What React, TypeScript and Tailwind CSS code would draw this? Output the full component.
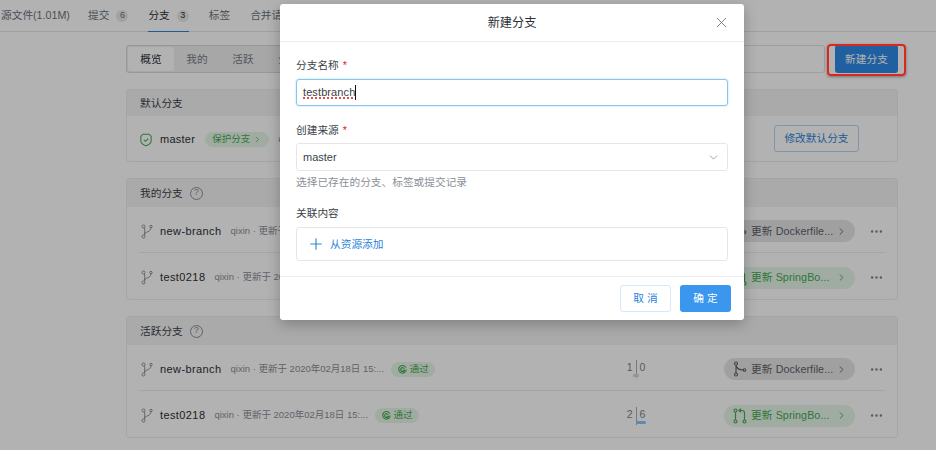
import { ChevronDown, ChevronRight, Ellipsis, Plus, X } from "lucide-react";

type Branch = {
  name: string;
  ahead: number;
  behind: number;
  behindBar: string;
  mergeTitle: string;
  green: boolean;
};

const branches: Branch[] = [
  { name: "new-branch", ahead: 1, behind: 0, behindBar: "w-0", mergeTitle: "更新 Dockerfile...", green: false },
  { name: "test0218", ahead: 2, behind: 6, behindBar: "w-[10px]", mergeTitle: "更新 SpringBo...", green: true },
];

function BranchIcon() {
  return (
    <svg viewBox="0 0 12 15" className="ml-[2px] h-[15px] w-[12px] shrink-0 text-[#8a8f98]" fill="none" stroke="currentColor" strokeWidth="1">
      <circle cx="2.500" cy="2.500" r="1.500" />
      <circle cx="2.500" cy="12.500" r="1.500" />
      <circle cx="10" cy="2.500" r="1.200" />
      <path d="M3.500 4c.3 2 .3 4 0 7M10 3.700c0 2.800-2.500 3.800-4.500 4.600-1 .4-1.700 1-2 1.700" />
    </svg>
  );
}

function MergedIcon() {
  return (
    <svg viewBox="0 0 14 16" className="h-[16px] w-[14px] shrink-0" fill="none" stroke="currentColor" strokeWidth="1.100">
      <circle cx="3" cy="2.500" r="1.500" />
      <circle cx="3" cy="13.500" r="1.500" />
      <circle cx="11.500" cy="9" r="1.300" />
      <path d="M3 4v8M3 4.500c.8 3 3.500 4.500 7.200 4.500" />
    </svg>
  );
}

function PullIcon() {
  return (
    <svg viewBox="0 0 14 16" className="h-[16px] w-[14px] shrink-0" fill="none" stroke="currentColor" strokeWidth="1.200">
      <circle cx="2.500" cy="2.500" r="1.500" />
      <circle cx="2.500" cy="13.500" r="1.500" />
      <circle cx="11.500" cy="13.500" r="1.500" />
      <path d="M2.500 4v8M11.500 12V5c0-1.500-1-2.500-2.500-2.500H6.500M8 .8 6 2.500 8 4.200" />
    </svg>
  );
}

function ShieldIcon() {
  return (
    <svg viewBox="0 0 14 16" className="h-[14px] w-[12px] shrink-0 text-[#45a853]" fill="none" stroke="currentColor" strokeWidth="1.200">
      <path d="M3.500 1.200h7L13 3.500v5.500c0 2.500-2.800 4.800-6 5.800-3.200-1-6-3.300-6-5.800V3.500z" />
      <path d="m4.500 7.800 1.900 1.800 3.200-3.200" />
    </svg>
  );
}

function PassBadge() {
  return (
    <span className="flex h-[15px] w-[44px] shrink-0 items-center justify-center gap-[3px] rounded-full bg-[#e6f7e8] text-[9.500px] text-[#45a853]">
      <svg viewBox="0 0 12 12" className="h-[9px] w-[9px]" fill="none" stroke="currentColor" strokeWidth="1.500">
        <path d="M10.500 3.500A5 5 0 1 0 11 6M8.500 5A2.600 2.600 0 1 0 8.600 7H6" />
      </svg>
      通过
    </span>
  );
}

function BranchRow({ branch, last }: { branch: Branch; last: boolean }) {
  return (
    <div className={`flex h-[46px] items-center pt-[3px] ${last ? "" : "border-b border-[#ececec]"}`}>
      <div className="flex min-w-0 flex-1 items-center">
        <BranchIcon />
        <span className="ml-[7px] text-[11px] tracking-[0.4px] text-[#2b2f36]">{branch.name}</span>
        <span className="ml-[9px] whitespace-nowrap text-[9.500px] text-[#8a8f98]">qixin · 更新于 2020年02月18日 15:...</span>
        <span className="ml-[7px]">
          <PassBadge />
        </span>
      </div>
      <div className="relative mr-[76px] flex h-[18px] w-[24px] items-start justify-center gap-[3px] text-[10.500px] leading-[14px] text-[#7d838c]">
        <span>{branch.ahead}</span>
        <span className="h-[18px] w-px bg-[#a8aeb8]" />
        <span>{branch.behind}</span>
        <span className={`absolute top-[14px] left-[12px] h-[3px] rounded-r-sm bg-[#8cc4f7] ${branch.behindBar}`} />
        {branch.behind === 0 && <span className="absolute top-[14px] left-[9px] h-[3px] w-[6px] bg-[#cfd8e2]" />}
      </div>
      <div
        className={`flex h-[22px] w-[131px] shrink-0 items-center rounded-full pr-[8px] pl-[9px] text-[10.700px] tracking-[0.1px] ${
          branch.green ? "bg-[#e6f7e8] text-[#45a853]" : "bg-[#e6e6e6] text-[#5b616b]"
        }`}
      >
        {branch.green ? <PullIcon /> : <MergedIcon />}
        <span className="ml-[4px] flex-1 whitespace-nowrap">{branch.mergeTitle}</span>
        <ChevronRight size={11} />
      </div>
      <Ellipsis size={15} className="mr-[1px] ml-[14px] text-[#7d838c]" />
    </div>
  );
}

function BranchSection({ title }: { title: string }) {
  return (
    <section className="mt-[16px] rounded-[3px] border border-[#ececec]">
      <div className="flex h-[28px] items-center gap-[7px] bg-[#f4f4f4] px-[13px] text-[10.700px] text-[#3a3f47]">
        {title}
        <span className="flex h-[13px] w-[13px] items-center justify-center rounded-full border border-[#8a8f98] text-[9px] text-[#8a8f98]">?</span>
      </div>
      <div className="px-[12px]">
        {branches.map((b, i) => (
          <BranchRow key={b.name} branch={b} last={i === branches.length - 1} />
        ))}
      </div>
    </section>
  );
}

function Tab({ label, count, active }: { label: string; count?: number; active?: boolean }) {
  return (
    <div className={`flex h-[32px] items-center gap-[7px] border-b-[1px] ${active ? "border-[#2a83dc] text-[#2b2f36]" : "border-transparent text-[#6b7280]"}`}>
      {label}
      {count !== undefined && (
        <span className="flex h-[12px] min-w-[12px] items-center justify-center rounded-full bg-[#e8e8e8] text-[9px]">{count}</span>
      )}
    </div>
  );
}

export default function App() {
  return (
    <div className="relative h-[450px] w-[936px] overflow-hidden bg-white font-['Liberation_Sans','Noto_Sans_CJK_SC',sans-serif]">
      {/* page behind the dialog */}
      <div className="flex h-[32px] gap-[20px] border-b border-[#e4e4e4] pl-px text-[10.700px]">
        <div className="w-[67px] whitespace-nowrap">
          <Tab label="源文件(1.01M)" />
        </div>
        <Tab label="提交" count={6} />
        <Tab label="分支" count={3} active />
        <Tab label="标签" />
        <Tab label="合并请求" />
      </div>

      <main className="ml-[126px] w-[772px] pt-[13px]">
        <div className="flex h-[28px] justify-between">
          <div className="flex rounded-[3px] border border-[#d8d8d8] bg-[#efefef] p-px text-[10.700px] text-[#777c85]">
            <span className="flex w-[46px] items-center justify-center rounded-[2px] bg-white text-[#2b2f36]">概览</span>
            <span className="flex w-[46px] items-center justify-center">我的</span>
            <span className="flex w-[46px] items-center justify-center">活跃</span>
            <span className="flex w-[46px] items-center justify-center">全部</span>
          </div>
          <div className="ml-[16px] flex-1 rounded-[3px] border border-[#e2e2e2]" />
          <button className="ml-[10px] h-[28px] w-[63px] rounded-[3px] bg-[#2f8ae6] text-[10.700px] text-white">新建分支</button>
        </div>

        <section className="mt-[16px] rounded-[3px] border border-[#ececec]">
          <div className="flex h-[26px] items-center bg-[#f4f4f4] px-[13px] text-[10.700px] text-[#3a3f47]">默认分支</div>
          <div className="flex h-[45px] items-center px-[13px]">
            <div className="flex items-center pt-[2px]">
              <ShieldIcon />
              <span className="ml-[8px] text-[11px] tracking-[0.25px] text-[#2b2f36]">master</span>
              <span className="ml-[10px] flex h-[15px] items-center gap-[3px] rounded-full bg-[#e6f7e8] px-[7px] text-[9.500px] text-[#45a853]">
                保护分支 <ChevronRight size={9} />
              </span>
              <span className="ml-[9px] whitespace-nowrap text-[9.500px] text-[#8a8f98]">qixin</span>
            </div>
            <button className="mr-[25px] ml-auto h-[27px] w-[85px] rounded-[3px] border border-[#b5d6f7] text-[10.700px] text-[#2a83dc]">修改默认分支</button>
          </div>
        </section>

        <BranchSection title="我的分支" />
        <BranchSection title="活跃分支" />
      </main>

      {/* dim layer */}
      <div className="absolute inset-0 bg-black/30" />

      {/* annotation around the new branch button */}
      <div className="absolute top-[44px] left-[827px] h-[32px] w-[79px] rounded-[4px] border-[2px] border-[#d9281e] shadow-[0_1px_3px_rgba(0,0,0,0.35)]" />

      {/* dialog */}
      <div className="absolute top-[4px] left-[280px] flex h-[316px] w-[464px] flex-col rounded-[3px] bg-white shadow-[0_4px_14px_rgba(0,0,0,0.25)]">
        <div className="flex h-[38px] shrink-0 items-center justify-center border-b border-[#ededed] pt-[2px] text-[12.200px] text-[#2b2f36]">
          新建分支
          <X size={17} strokeWidth={1.3} className="absolute top-[10px] right-[14px] text-[#777c85]" />
        </div>

        <div className="flex flex-1 flex-col px-[16px] pt-[16px] text-[10.700px]">
          <div className="flex h-[14px] items-center text-[#3a3f47]">
            分支名称 <span className="ml-[4px] text-[#d9281e]">*</span>
          </div>
          <div className="mt-[7px] flex h-[27px] items-center rounded-[3px] border border-[#86c5ee] px-[6px] text-[11px] tracking-[0.1px] text-[#3a3f47] shadow-[0_0_2px_#9fd3f2]">
            <span className="underline decoration-[#e05050] decoration-dotted decoration-[1.5px] underline-offset-1 [text-decoration-skip-ink:none]">testbranch</span>
            <span className="h-[15px] w-px bg-[#111]" />
          </div>

          <div className="mt-[17px] flex h-[14px] items-center text-[#3a3f47]">
            创建来源 <span className="ml-[4px] text-[#d9281e]">*</span>
          </div>
          <div className="mt-[6px] flex h-[28px] items-center justify-between rounded-[3px] border border-[#e6e6e6] px-[6px] text-[11px] text-[#3a3f47]">
            master
            <ChevronDown size={13} strokeWidth={1.3} className="mr-[1px] text-[#777c85]" />
          </div>
          <div className="mt-[3px] h-[14px] text-[#8a8f98]">选择已存在的分支、标签或提交记录</div>

          <div className="mt-[17px] h-[14px] text-[#3a3f47]">关联内容</div>
          <div className="mt-[8px] flex h-[34px] items-center rounded-[3px] border border-[#e6e6e6] pl-[10px] text-[#2a83dc]">
            <Plus size={18} strokeWidth={1.5} />
            <span className="ml-[5px]">从资源添加</span>
          </div>
        </div>

        <div className="flex h-[44px] shrink-0 items-center justify-end gap-[9px] border-t border-[#ededed] pr-[13px] text-[10.700px] tracking-[3px]">
          <button className="h-[27px] w-[51px] rounded-[3px] border border-[#d3e8fb] pl-[3px] text-[#2a83dc]">取消</button>
          <button className="h-[27px] w-[51px] rounded-[3px] bg-[#3b97ee] pl-[3px] text-white">确定</button>
        </div>
      </div>
    </div>
  );
}
